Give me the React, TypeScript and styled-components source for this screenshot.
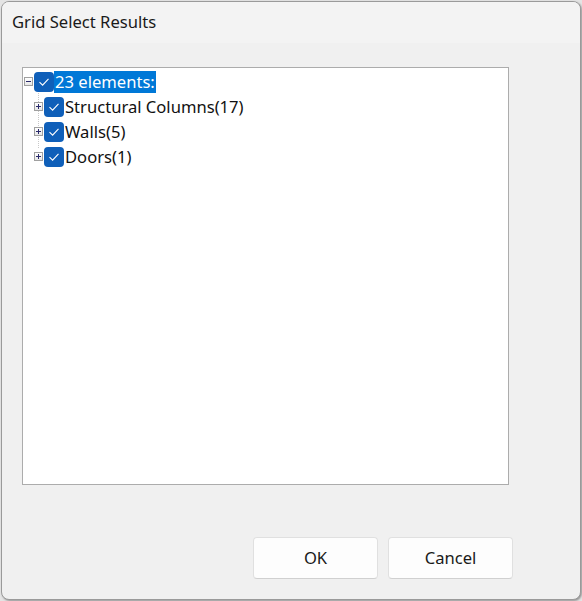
import React from "react";
import styled, { createGlobalStyle } from "styled-components";

const Global = createGlobalStyle`
  html, body { margin: 0; padding: 0; }
  body {
    background: #e4e4e4;
    font-family: "Noto Sans", "Segoe UI", sans-serif;
    width: 582px;
    height: 601px;
    overflow: hidden;
  }
`;

const Window = styled.div`
  box-sizing: border-box;
  margin: 1px 0 0 1px;
  width: 580px;
  height: 599px;
  border: 1px solid #9a9a9a;
  border-radius: 8px;
  background: #f0f0f0;
  display: flex;
  flex-direction: column;
  overflow: hidden;
  box-shadow: 1px 1px 2px rgba(0, 0, 0, 0.35);
`;

const TitleBar = styled.div`
  height: 41px;
  background: #f3f3f3;
  display: flex;
  align-items: center;
  padding-left: 10px;
  font-size: 16.6px;
  color: #1a1a1a;
  padding-bottom: 2px;
  box-sizing: border-box;
`;

const Content = styled.div`
  flex: 1;
  display: flex;
  flex-direction: column;
  padding: 24px 0 0 20px;
`;

const TreePanel = styled.div`
  box-sizing: border-box;
  width: 487px;
  height: 418px;
  background: #ffffff;
  border: 1px solid #acacac;
  padding-top: 1px;
  display: flex;
  flex-direction: column;
  position: relative;
`;

const Row = styled.div<{ $depth: number }>`
  height: 25px;
  display: flex;
  align-items: center;
  padding-left: ${(p) => 1 + p.$depth * 10}px;
  position: relative;
`;

const Expander = styled.div`
  box-sizing: border-box;
  width: 9px;
  height: 9px;
  border: 1px solid #a0a0a0;
  background: linear-gradient(#ffffff, #e6e6e6);
  display: flex;
  align-items: center;
  justify-content: center;
  margin-right: 1px;
  position: relative;
  z-index: 1;
`;

const Check = styled.div`
  width: 20px;
  height: 20px;
  border-radius: 4px;
  background: #0f5fb9;
  display: flex;
  align-items: center;
  justify-content: center;
  flex: none;
`;

const Label = styled.span<{ $selected?: boolean }>`
  font-size: 16.6px;
  line-height: 22px;
  height: 22px;
  padding: 0 1px;
  color: ${(p) => (p.$selected ? "#ffffff" : "#111111")};
  background: ${(p) => (p.$selected ? "#0078d7" : "transparent")};
  white-space: nowrap;
`;

const TreeLine = styled.div`
  position: absolute;
  left: 15px;
  top: 19px;
  width: 0;
  height: 61px;
  border-left: 1px dotted #c8c8c8;
`;

const Footer = styled.div`
  margin-top: auto;
  display: flex;
  justify-content: flex-end;
  gap: 10px;
  padding: 0 67px 20px 0;
`;

const Button = styled.button`
  box-sizing: border-box;
  width: 125px;
  height: 42px;
  background: #fdfdfd;
  border: 1px solid #e0e0e0;
  border-bottom-color: #d0d0d0;
  border-radius: 4px;
  font-family: "Noto Sans", "Segoe UI", sans-serif;
  font-size: 16.6px;
  color: #1a1a1a;
  padding: 0 0 1px;
`;

const Mark = ({ plus }: { plus: boolean }) => (
  <svg width="7" height="7" viewBox="0 0 7 7">
    <rect x="1" y="3" width="5" height="1" fill="#2a2a6a" />
    {plus && <rect x="3" y="1" width="1" height="5" fill="#2a2a6a" />}
  </svg>
);

const Tick = () => (
  <svg width="12" height="10" viewBox="0 0 12 10">
    <path d="M1.5 5.2 L4.6 8.2 L10.5 1.8" fill="none" stroke="#ffffff" strokeWidth="1.1" />
  </svg>
);

type Item = { label: string; depth: number; expandable: "plus" | "minus"; selected?: boolean };

const items: Item[] = [
  { label: "23 elements:", depth: 0, expandable: "minus", selected: true },
  { label: "Structural Columns(17)", depth: 1, expandable: "plus" },
  { label: "Walls(5)", depth: 1, expandable: "plus" },
  { label: "Doors(1)", depth: 1, expandable: "plus" },
];

export default function App() {
  return (
    <>
      <Global />
      <Window>
        <TitleBar>Grid Select Results</TitleBar>
        <Content>
          <TreePanel>
            <TreeLine />
            {items.map((it) => (
              <Row key={it.label} $depth={it.depth}>
                <Expander>
                  <Mark plus={it.expandable === "plus"} />
                </Expander>
                <Check>
                  <Tick />
                </Check>
                <Label $selected={it.selected}>{it.label}</Label>
              </Row>
            ))}
          </TreePanel>
        </Content>
        <Footer>
          <Button>OK</Button>
          <Button>Cancel</Button>
        </Footer>
      </Window>
    </>
  );
}
